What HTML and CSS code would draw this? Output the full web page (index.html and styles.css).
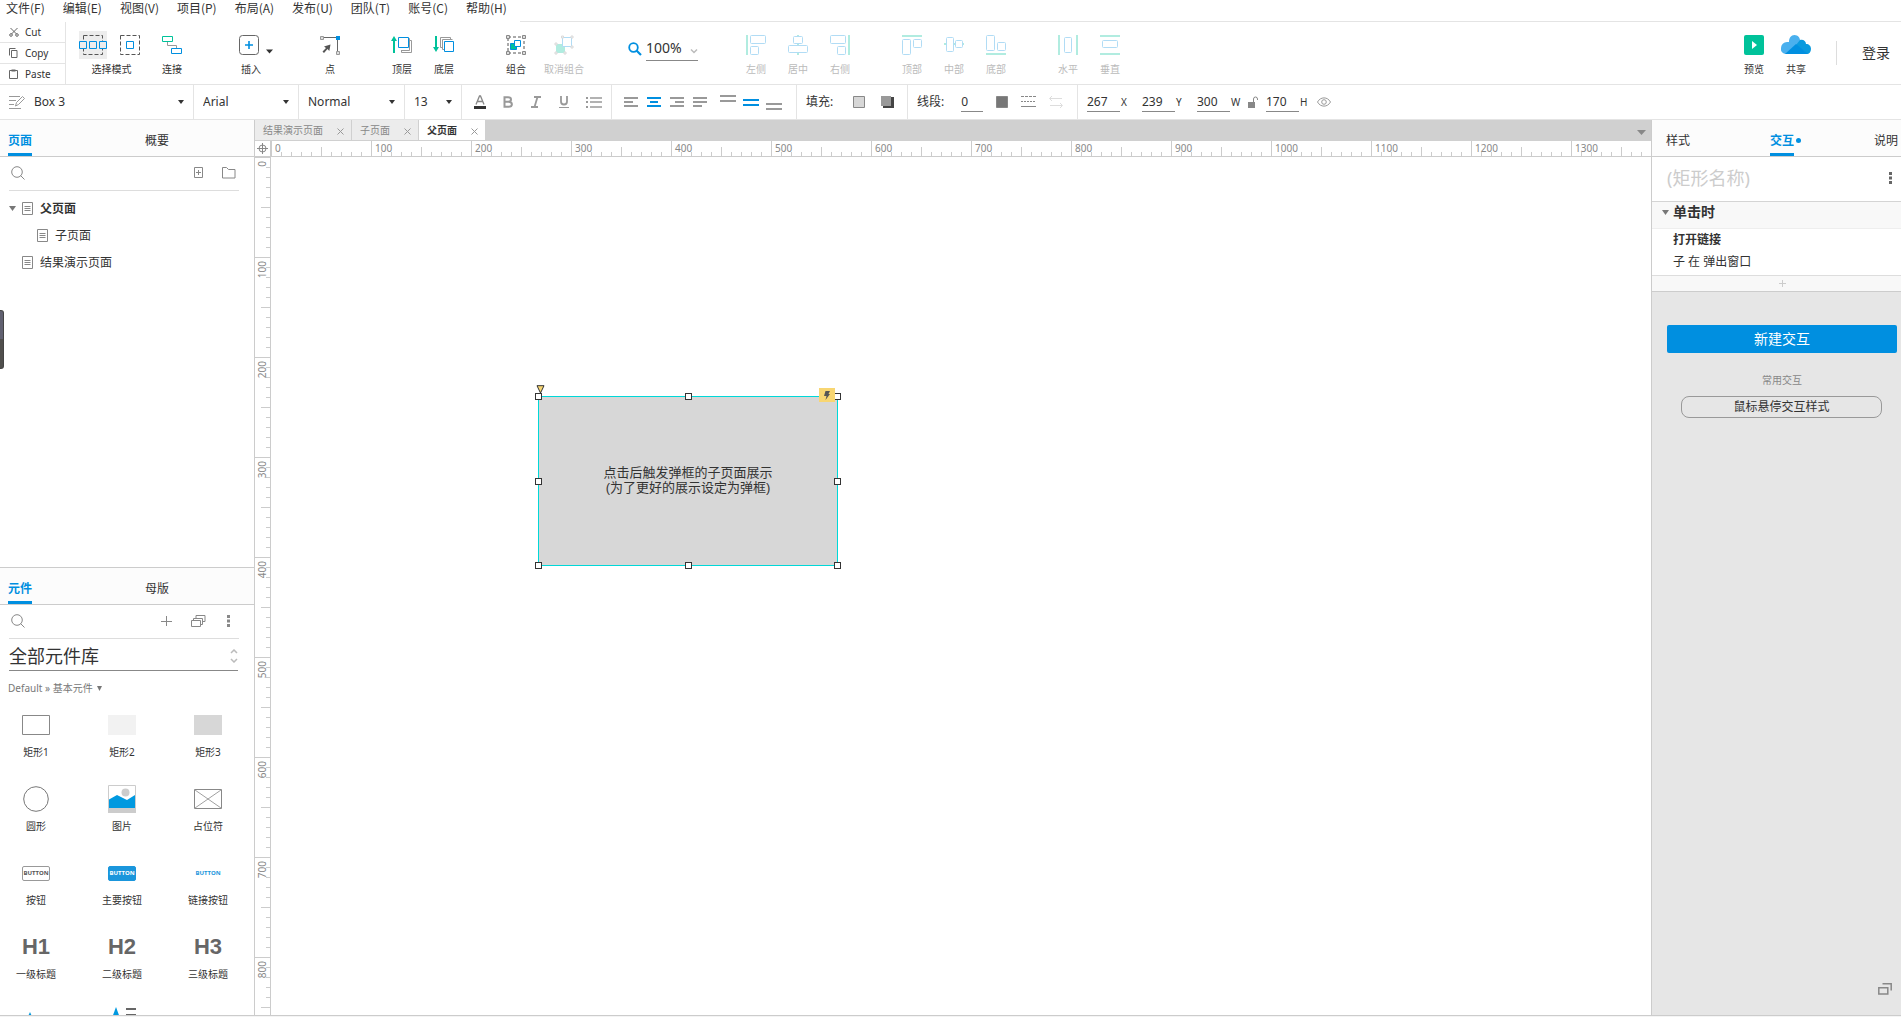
FILE: index.html
```
<!DOCTYPE html>
<html lang="zh-CN">
<head>
<meta charset="utf-8">
<meta name="viewport" content="width=device-width, initial-scale=1">
<title>父页面</title>
<link rel="stylesheet" href="styles.css">
</head>
<body>
<div class="app">
  <nav class="menubar">
    <button>文件(F)</button><button>编辑(E)</button><button>视图(V)</button><button>项目(P)</button><button>布局(A)</button><button>发布(U)</button><button>团队(T)</button><button>账号(C)</button><button>帮助(H)</button>
  </nav>

  <header class="toolbar">
    <div class="clipboard">
      <button><svg width="10" height="10" viewBox="0 0 10 10" fill="none" stroke="#666"><path d="M1.5 1l6 6M8.500 1l-6 6"/><circle cx="2" cy="8" r="1.300"/><circle cx="8" cy="8" r="1.300"/></svg>Cut</button>
      <button><svg width="10" height="10" viewBox="0 0 10 10" fill="none" stroke="#666"><path d="M2.500 2.500h5.500v7h-5.500z"/><path d="M.5 7.500v-7h6"/></svg>Copy</button>
      <button><svg width="10" height="10" viewBox="0 0 10 10" fill="none" stroke="#666"><path d="M.5 1.500h8v8h-8z"/><path d="M2.500 1.500h4" stroke-width="2"/></svg>Paste</button>
    </div>

    <div class="mode">
      <div class="mode-icons">
        <button class="mode-btn active" aria-label="相交选中"><svg width="28" height="28" viewBox="0 0 28 28" fill="none"><path d="M4.500 4.500h19v19h-19z" stroke="#555" stroke-dasharray="4 2"/><g fill="#ededed" stroke="#008fe0"><path d="M.5 10.500h7v7h-7zM10.500 10.500h7v7h-7zM20.500 10.500h7v7h-7z"/></g></svg></button>
        <button class="mode-btn" aria-label="包含选中"><svg width="28" height="28" viewBox="0 0 28 28" fill="none"><path d="M4.500 4.500h19v19h-19z" stroke="#555" stroke-dasharray="4 2"/><path d="M10.500 10.500h7v7h-7z" stroke="#008fe0"/></svg></button>
      </div>
      <span class="tool-label">选择模式</span>
    </div>

    <button class="tool connect"><svg width="20" height="20" viewBox="0 0 20 20" fill="none"><path d="M5.500 7v3.500h9V13" stroke="#999"/><path d="M.5 1.500h10v5H.5z" stroke="#00c29a"/><path d="M9.500 13.500h10v5h-10z" stroke="#008fe0"/></svg><span>连接</span></button>
    <button class="insert"><svg width="36" height="20" viewBox="0 0 36 20" fill="none"><rect x=".5" y=".5" width="19" height="19" rx="3" stroke="#666"/><path d="M10 6v8M6 10h8" stroke="#008fe0" stroke-width="1.600"/><path d="M27 14.500h7l-3.500 4z" fill="#333"/></svg><span>插入</span></button>
    <button class="tool point"><svg width="20" height="20" viewBox="0 0 20 20" fill="none"><path d="M3 2.500h14.500V17" stroke="#666"/><path d="M.5 1.500h3v3h-3zM16.500 16.500h3v3h-3z" fill="#ddd" stroke="#999"/><path d="M16 1h4v4h-4z" fill="#008fe0"/><path d="M10.500 9.500L9.300 16 7.500 14 4 18 2.500 16.500 6 13 4 11.500z" fill="#555"/></svg><span>点</span></button>
    <button class="tool gap-30"><svg width="22" height="20" viewBox="0 0 22 20" fill="none"><path d="M3 18V4" stroke="#00c29a" stroke-width="2"/><path d="M0 6l3-5 3 5z" fill="#00c29a"/><path d="M18 5.500h2.500v12h-10V15M16 3.500h2.500v12h-8" stroke="#999"/><path d="M7.500 2.500h10v10h-10z" stroke="#008fe0" fill="#fff"/></svg><span>顶层</span></button>
    <button class="tool"><svg width="22" height="20" viewBox="0 0 22 20" fill="none"><path d="M3 1v14" stroke="#00c29a" stroke-width="2"/><path d="M0 12l3 5 3-5z" fill="#00c29a"/><path d="M10 12.500H7.500v-10h10V5M12 14.500H9.500v-10h10" stroke="#999"/><path d="M11.500 6.500h9v10h-9z" stroke="#008fe0" fill="#fff"/></svg><span>底层</span></button>
    <button class="tool gap-30"><svg width="20" height="20" viewBox="0 0 20 20" fill="none"><path d="M2 2h16v16H2z" stroke="#555" stroke-dasharray="3 2"/><path d="M.5.5h3v3h-3zM16.500.5h3v3h-3zM.5 16.500h3v3h-3zM16.500 16.500h3v3h-3z" fill="#ddd" stroke="#888"/><path d="M4.500 8.500h6v6h-6z" fill="#00c29a" stroke="#008fe0"/><path d="M8.500 5.500h6v6h-6z" fill="#fff" stroke="#008fe0"/></svg><span>组合</span></button>
    <button class="tool ungroup" disabled><svg width="20" height="20" viewBox="0 0 20 20" fill="none"><path d="M2 9h9v9H2z" fill="#00c29a"/><path d="M8.500 2.500h9v9h-9z" fill="#fff" stroke="#008fe0"/><path d="M7.500 1h2v2h-2zM17 1h2v2h-2zM17 11h2v2h-2zM1 8h2v2H1zM1 17h2v2H1zM10 17h2v2h-2z" fill="#ddd" stroke="#888"/></svg><span>取消组合</span></button>

    <div class="zoom">
      <svg width="14" height="14" viewBox="0 0 14 14" fill="none" stroke="#008fe0" stroke-width="1.800"><circle cx="5.500" cy="5.500" r="4.300"/><path d="M8.500 8.500L13 13" stroke-width="2.200"/></svg>
      <label class="zoom-field"><input type="text" value="100%" aria-label="缩放"><svg width="8" height="6" viewBox="0 0 8 6" fill="none" stroke="#bbb" stroke-width="1.500"><path d="M1 1.500l3 3 3-3"/></svg></label>
    </div>

    <div class="tool-group first">
      <button class="tool" disabled><svg width="20" height="20" viewBox="0 0 20 20" fill="none"><path d="M1 0v20" stroke="#00c29a" stroke-width="2"/><rect x="4.500" y=".5" width="15" height="8" rx="1" stroke="#008fe0"/><rect x="4.500" y="11.500" width="8" height="8" rx="1" stroke="#008fe0"/></svg><span>左侧</span></button>
      <button class="tool" disabled><svg width="20" height="20" viewBox="0 0 20 20" fill="none"><path d="M10 0v20" stroke="#00c29a" stroke-width="2"/><g fill="#fff" stroke="#008fe0"><rect x="5.500" y="1.500" width="9" height="7" rx="1"/><rect x=".5" y="10.500" width="19" height="7" rx="1"/></g></svg><span>居中</span></button>
      <button class="tool" disabled><svg width="20" height="20" viewBox="0 0 20 20" fill="none"><path d="M19 0v20" stroke="#00c29a" stroke-width="2"/><rect x=".5" y=".5" width="15" height="8" rx="1" stroke="#008fe0"/><rect x="7.500" y="11.500" width="8" height="8" rx="1" stroke="#008fe0"/></svg><span>右侧</span></button>
    </div>
    <div class="tool-group">
      <button class="tool" disabled><svg width="20" height="20" viewBox="0 0 20 20" fill="none"><path d="M0 1h20" stroke="#00c29a" stroke-width="2"/><rect x=".5" y="4.500" width="8" height="15" rx="1" stroke="#008fe0"/><rect x="11.500" y="4.500" width="8" height="8" rx="1" stroke="#008fe0"/></svg><span>顶部</span></button>
      <button class="tool" disabled><svg width="20" height="20" viewBox="0 0 20 20" fill="none"><path d="M0 9h20" stroke="#00c29a" stroke-width="2"/><g fill="#fff" stroke="#008fe0"><rect x="2.500" y="2.500" width="7" height="14" rx="1"/><rect x="11.500" y="5.500" width="7" height="7" rx="1"/></g></svg><span>中部</span></button>
      <button class="tool" disabled><svg width="20" height="20" viewBox="0 0 20 20" fill="none"><path d="M0 19h20" stroke="#00c29a" stroke-width="2"/><rect x=".5" y=".5" width="8" height="15" rx="1" stroke="#008fe0"/><rect x="11.500" y="7.500" width="8" height="8" rx="1" stroke="#008fe0"/></svg><span>底部</span></button>
    </div>
    <div class="tool-group">
      <button class="tool" disabled><svg width="20" height="20" viewBox="0 0 20 20" fill="none"><path d="M1 0v20M19 0v20" stroke="#00c29a" stroke-width="2"/><rect x="6.500" y="2.500" width="7" height="15" rx="1" stroke="#008fe0"/></svg><span>水平</span></button>
      <button class="tool" disabled><svg width="20" height="20" viewBox="0 0 20 20" fill="none"><path d="M0 1h20M0 19h20" stroke="#00c29a" stroke-width="2"/><rect x="2.500" y="5.500" width="15" height="7" rx="1" stroke="#008fe0"/></svg><span>垂直</span></button>
    </div>

    <div class="account">
      <button class="tool"><svg width="20" height="20" viewBox="0 0 20 20"><rect width="20" height="20" rx="2" fill="#00c29a"/><path d="M8 6l5 4-5 4z" fill="#fff"/></svg><span>预览</span></button>
      <button class="tool"><svg width="30" height="20" viewBox="0 0 30 20"><path d="M5 19a5 5 0 0 1-5-6 6 6 0 0 1 6-6h2C8 3 10 0 13.500 0S19 3 19 5l4 3-4 11z" fill="#4ab0ee"/><path d="M15 10l4-5c3-1 6 1 6 4 3 0 5 2 5 5 0 3-2 5-4 5z" fill="#0a9ade"/><path d="M4 19L15 9l12 10z" fill="#008fe0"/></svg><span>共享</span></button>
      <button class="login">登录</button>
    </div>
  </header>

  <div class="format">
    <div class="seg seg-name">
      <svg width="16" height="14" viewBox="0 0 16 14" fill="none" stroke="#999"><path d="M0 1.500h11M0 5.500h7M0 9.500h5M0 13.500h12"/><path d="M6.500 11l1-3.500 6-6 2 2-6 6z"/></svg>
      <label class="pick"><select aria-label="样式"><option>Box 3</option></select></label>
    </div>
    <div class="seg seg-font"><label class="pick"><select aria-label="字体"><option>Arial</option></select></label></div>
    <div class="seg seg-weight"><label class="pick"><select aria-label="字型"><option>Normal</option></select></label></div>
    <div class="seg seg-size"><label class="pick"><select aria-label="字号"><option>13</option></select></label></div>
    <div class="seg seg-text">
      <button aria-label="文字颜色"><svg width="12" height="14" viewBox="0 0 12 14" fill="none"><path d="M2 9.500L5.500 1h1L10 9.500M3.500 6.500h5" stroke="#888" stroke-width="1.300"/><path d="M0 12.500h12" stroke="#333" stroke-width="3"/></svg></button>
      <button aria-label="粗体"><svg width="12" height="14" viewBox="0 0 12 14" fill="none" stroke="#999" stroke-width="2"><path d="M2.500 2.200h3.500c4 0 4 4.600 0 4.600H2.500h4c4.500 0 4.500 5 0 5h-4z"/></svg></button>
      <button aria-label="斜体"><svg width="12" height="14" viewBox="0 0 12 14" fill="none" stroke="#999" stroke-width="1.800"><path d="M4 2h7M1 12h7M7.500 2l-3 10"/></svg></button>
      <button aria-label="下划线"><svg width="12" height="14" viewBox="0 0 12 14" fill="none" stroke="#999"><path d="M3 1v5.500a3 3 0 0 0 6 0V1" stroke-width="1.800"/><path d="M1 12.500h10"/></svg></button>
      <button aria-label="项目符号"><svg width="16" height="14" viewBox="0 0 16 14" stroke="#999" stroke-width="2"><path d="M0 3h2M0 7h2M0 12h2"/><path d="M4 3h12M4 7h12M4 12h12" stroke-width="1.500"/></svg></button>
    </div>
    <div class="seg seg-align">
      <button aria-label="左对齐"><svg width="14" height="12" viewBox="0 0 14 12" stroke="#999" stroke-width="2"><path d="M0 2h14M0 6h9M0 10h14"/></svg></button>
      <button aria-label="居中对齐"><svg width="14" height="12" viewBox="0 0 14 12" stroke="#008fe0" stroke-width="2"><path d="M0 2h14M3 6h8M0 10h14"/></svg></button>
      <button aria-label="右对齐"><svg width="14" height="12" viewBox="0 0 14 12" stroke="#999" stroke-width="2"><path d="M0 2h14M5 6h9M0 10h14"/></svg></button>
      <button aria-label="两端对齐"><svg width="14" height="12" viewBox="0 0 14 12" stroke="#999" stroke-width="2"><path d="M0 2h14M0 6h14M0 10h9"/></svg></button>
      <button class="valign" aria-label="顶部对齐"><svg width="16" height="16" viewBox="0 0 16 16" stroke="#999" stroke-width="2"><path d="M0 2h16M0 7h16"/></svg></button>
      <button class="valign" aria-label="垂直居中"><svg width="16" height="16" viewBox="0 0 16 16" stroke="#008fe0" stroke-width="2"><path d="M0 6h16M0 11h16"/></svg></button>
      <button class="valign" aria-label="底部对齐"><svg width="16" height="16" viewBox="0 0 16 16" stroke="#999" stroke-width="2"><path d="M0 10h16M0 15h16"/></svg></button>
    </div>
    <div class="seg seg-fill">
      <span class="seg-title">填充:</span>
      <button aria-label="填充颜色"><svg width="12" height="12" viewBox="0 0 12 12"><path d="M.5.5h11v11H.5z" fill="#d7d7d7" stroke="#888"/></svg></button>
      <button aria-label="阴影"><svg width="13" height="12" viewBox="0 0 13 12"><path d="M2 1h11v11H2z" fill="#444"/><path d="M0 0h10v10H0z" fill="#999"/></svg></button>
    </div>
    <div class="seg seg-line">
      <label class="seg-title" for="line-w">线段:</label><input id="line-w" class="num short" type="text" value="0">
      <button aria-label="线段颜色"><svg width="12" height="12" viewBox="0 0 12 12"><path d="M.5.5h11v11H.5z" fill="#777" stroke="#888"/></svg></button>
      <button aria-label="线型"><svg width="15" height="12" viewBox="0 0 15 12" stroke="#888"><path d="M0 .5h15" stroke-dasharray="3 1"/><path d="M0 5.500h15" stroke-dasharray="2 1"/><path d="M0 10.500h15"/></svg></button>
      <button aria-label="箭头"><svg width="14" height="12" viewBox="0 0 14 12" fill="none" stroke="#ddd"><path d="M13 2.500H1M3 0L.5 2.500 3 5M1 9.500h12M11 7l2.500 2.500L11 12"/></svg></button>
    </div>
    <div class="seg seg-geo">
      <label><input class="num" type="text" value="267"><span>X</span></label>
      <label><input class="num" type="text" value="239"><span>Y</span></label>
      <label><input class="num" type="text" value="300"><span>W</span></label>
      <button class="lock" aria-label="锁定比例"><svg width="10" height="12" viewBox="0 0 10 12" fill="none"><path d="M0 6h7v6H0z" fill="#888"/><path d="M5.500 6V3a2 2 0 0 1 4 0v1" stroke="#888"/></svg></button>
      <label><input class="num" type="text" value="170"><span>H</span></label>
      <button class="eye" aria-label="可见性"><svg width="14" height="10" viewBox="0 0 14 10" fill="none" stroke="#999"><path d="M.5 5C3.500-.5 10.500-.5 13.500 5 10.500 10.500 3.500 10.500.5 5z"/><circle cx="7" cy="5" r="2.300"/></svg></button>
    </div>
  </div>

  <main class="work">
    <aside class="left">
      <section class="pages">
        <div class="tabs"><button class="tab on">页面</button><button class="tab">概要</button></div>
        <div class="search">
          <button aria-label="搜索"><svg width="14" height="14" viewBox="0 0 14 14" fill="none" stroke="#888"><circle cx="6" cy="6" r="5.300"/><path d="M9.500 9.500l4 4"/></svg></button>
          <span class="grow"></span>
          <button aria-label="添加页面"><svg width="9" height="12" viewBox="0 0 9 12" fill="none" stroke="#888"><path d="M.5.5h8v10h-8zM4.500 3v5M2 5.500h5"/></svg></button>
          <button class="folder" aria-label="添加文件夹"><svg width="14" height="12" viewBox="0 0 14 12" fill="none" stroke="#888"><path d="M.5.500h4l2 2h6.500v8.500H.5z"/></svg></button>
        </div>
        <ul class="tree">
          <li><button class="current"><svg width="7" height="5" viewBox="0 0 7 5"><path d="M0 0h7L3.500 5z" fill="#777"/></svg><svg class="doc" width="11" height="13" viewBox="0 0 11 13" fill="none" stroke="#888"><path d="M.5.5h10v12H.5zM2.500 4.500h6M2.500 6.500h6M2.500 8.500h6"/></svg>父页面</button></li>
          <li><button class="child"><svg class="doc" width="11" height="13" viewBox="0 0 11 13" fill="none" stroke="#888"><path d="M.5.5h10v12H.5zM2.500 4.500h6M2.500 6.500h6M2.500 8.500h6"/></svg>子页面</button></li>
          <li><button class="root"><svg class="doc" width="11" height="13" viewBox="0 0 11 13" fill="none" stroke="#888"><path d="M.5.5h10v12H.5zM2.500 4.500h6M2.500 6.500h6M2.500 8.500h6"/></svg>结果演示页面</button></li>
        </ul>
      </section>

      <section class="widgets">
        <div class="tabs"><button class="tab on">元件</button><button class="tab">母版</button></div>
        <div class="search">
          <button aria-label="搜索"><svg width="14" height="14" viewBox="0 0 14 14" fill="none" stroke="#888"><circle cx="6" cy="6" r="5.300"/><path d="M9.500 9.500l4 4"/></svg></button>
          <span class="grow"></span>
          <button aria-label="添加元件库"><svg width="11" height="12" viewBox="0 0 11 12" stroke="#888"><path d="M5.500 1v10M0 6.500h11"/></svg></button>
          <button aria-label="元件库列表"><svg width="15" height="12" viewBox="0 0 15 12" fill="none" stroke="#888"><path d="M.5 5.500h9v6h-9zM2.500 5V3.500h9v6H10M5 3V.5h9v6h-2.500"/></svg></button>
          <button class="more" aria-label="更多"><svg width="4" height="12" viewBox="0 0 4 12" fill="#888"><path d="M0 0h3v3H0zM0 4.500h3v3H0zM0 9h3v3H0z"/></svg></button>
        </div>
        <label class="library"><select aria-label="元件库"><option>全部元件库</option></select><svg width="8" height="14" viewBox="0 0 8 14" fill="none" stroke="#bbb" stroke-width="1.500"><path d="M1 4l3-3 3 3M1 10l3 3 3-3"/></svg></label>
        <button class="crumb">Default » 基本元件 <svg width="5" height="5" viewBox="0 0 5 5"><path d="M0 0h5L2.500 5z" fill="#777"/></svg></button>
        <div class="shapes">
          <button><span class="pic"><svg width="28" height="20" viewBox="0 0 28 20"><path d="M.5.5h27v19H.5z" fill="#fff" stroke="#888"/></svg></span><span>矩形1</span></button>
          <button><span class="pic"><svg width="28" height="20"><rect width="28" height="20" fill="#f2f2f2"/></svg></span><span>矩形2</span></button>
          <button><span class="pic"><svg width="28" height="20"><rect width="28" height="20" fill="#d7d7d7"/></svg></span><span>矩形3</span></button>
          <button><span class="pic"><svg width="26" height="26" viewBox="0 0 26 26"><circle cx="13" cy="13" r="12.300" fill="#fff" stroke="#777"/></svg></span><span>圆形</span></button>
          <button><span class="pic"><svg width="28" height="28" viewBox="0 0 28 28"><path d="M.5.5h27v27H.5z" fill="#fff" stroke="#ccc"/><path d="M0 23h28v5H0z" fill="#ccc"/><circle cx="17.500" cy="7.500" r="4" fill="#ccc"/><path d="M1 14.500L9 10l10 5 8-5v13H1z" fill="#0099e0"/></svg></span><span>图片</span></button>
          <button><span class="pic"><svg width="28" height="20" viewBox="0 0 28 20" fill="none" stroke="#888"><path d="M.5.5h27v19H.5z"/><path d="M1 1l26 18M27 1L1 19" stroke-width=".8"/></svg></span><span>占位符</span></button>
          <button><span class="pic"><span class="btn-pic">BUTTON</span></span><span>按钮</span></button>
          <button><span class="pic"><span class="btn-pic solid">BUTTON</span></span><span>主要按钮</span></button>
          <button><span class="pic"><span class="btn-pic link">BUTTON</span></span><span>链接按钮</span></button>
          <button><span class="pic head">H1</span><span>一级标题</span></button>
          <button><span class="pic head">H2</span><span>二级标题</span></button>
          <button><span class="pic head">H3</span><span>三级标题</span></button>
          <button aria-label="文本标签"><span class="pic"><svg width="28" height="28" viewBox="0 0 28 28"><path d="M8 5l8 18H0z" fill="#0099e0"/></svg></span></button>
          <button aria-label="文本段落"><span class="pic"><svg width="28" height="28" viewBox="0 0 28 28"><path d="M8 0l8 22H0z" fill="#0099e0"/><path d="M18 2h10M18 8h10M18 14h10" stroke="#666" stroke-width="2"/></svg></span></button>
        </div>
      </section>
      <span class="side-handle"></span>
    </aside>

    <section class="center">
      <div class="doc-tabs">
        <div class="doc-tab"><a href="#">结果演示页面</a><button aria-label="关闭"><svg width="7" height="7" viewBox="0 0 7 7" stroke="#999"><path d="M.5.500l6 6M6.500.5l-6 6"/></svg></button></div>
        <div class="doc-tab"><a href="#">子页面</a><button aria-label="关闭"><svg width="7" height="7" viewBox="0 0 7 7" stroke="#999"><path d="M.5.500l6 6M6.500.5l-6 6"/></svg></button></div>
        <div class="doc-tab on"><a href="#">父页面</a><button aria-label="关闭"><svg width="7" height="7" viewBox="0 0 7 7" stroke="#999"><path d="M.5.500l6 6M6.500.5l-6 6"/></svg></button></div>
        <button class="tab-list" aria-label="全部标签"><svg width="9" height="5" viewBox="0 0 9 5"><path d="M0 0h9L4.500 5z" fill="#888"/></svg></button>
      </div>
      <div class="ruler-row">
        <span class="corner"><svg width="11" height="11" viewBox="0 0 11 11" fill="none" stroke="#888"><circle cx="5.500" cy="5.500" r="3.500"/><path d="M5.500 0v11M0 5.500h11"/></svg></span>
        <div class="ruler-x"><span>0</span><span>100</span><span>200</span><span>300</span><span>400</span><span>500</span><span>600</span><span>700</span><span>800</span><span>900</span><span>1000</span><span>1100</span><span>1200</span><span>1300</span></div>
      </div>
      <div class="canvas-row">
        <div class="ruler-y"><div><span>0</span></div><div><span>100</span></div><div><span>200</span></div><div><span>300</span></div><div><span>400</span></div><div><span>500</span></div><div><span>600</span></div><div><span>700</span></div><div><span>800</span></div></div>
        <div class="canvas">
          <div class="shape">
            <p>点击后触发弹框的子页面展示<br>(为了更好的展示设定为弹框)</p>
            <i class="h nw"></i><i class="h n"></i><i class="h ne"></i><i class="h w"></i><i class="h e"></i><i class="h sw"></i><i class="h s"></i><i class="h se"></i>
            <svg class="radius" width="9" height="9" viewBox="0 0 9 9"><path d="M1 .7h7L4.500 8z" fill="#f8d672" stroke="#333"/></svg>
            <span class="bolt"><svg width="6" height="9" viewBox="0 0 6 9"><path d="M1.500 0H6L4.500 3H6L1.500 9l1-4H0z" fill="#555"/></svg></span>
          </div>
        </div>
      </div>
    </section>

    <aside class="right">
      <div class="tabs"><button class="tab">样式</button><button class="tab on dot">交互</button><button class="tab">说明</button></div>
      <div class="name"><input type="text" placeholder="(矩形名称)" aria-label="名称"><button aria-label="更多"><svg width="3" height="12" viewBox="0 0 3 12" fill="#666"><path d="M0 0h3v3H0zM0 4.500h3v3H0zM0 9h3v3H0z"/></svg></button></div>
      <h2 class="event"><svg width="7" height="5" viewBox="0 0 7 5"><path d="M0 0h7L3.500 5z" fill="#777"/></svg>单击时</h2>
      <div class="action"><strong>打开链接</strong><span>子 在 弹出窗口</span></div>
      <button class="add-action" aria-label="添加动作"><svg width="7" height="7" viewBox="0 0 7 7" stroke="#ccc"><path d="M3.500 0v7M0 3.500h7"/></svg></button>
      <div class="more-panel">
        <button class="primary">新建交互</button>
        <span class="hint">常用交互</span>
        <button class="outline">鼠标悬停交互样式</button>
        <button class="popout" aria-label="弹出面板"><svg width="14" height="12" viewBox="0 0 14 12" fill="none" stroke="#888"><path d="M.800 4.800h9v6.200h-9z" stroke-width="1.500"/><path d="M4.500.800h8.700v6.700" stroke-width="1.500"/></svg></button>
      </div>
    </aside>
  </main>
  <footer class="foot"></footer>
</div>
</body>
</html>
```
FILE: styles.css
```
* { box-sizing: border-box; }
body {
  margin: 0;
  background: #fff;
  color: #333;
  font: 12px/16px "Noto Sans", "Noto Sans CJK SC", sans-serif;
}
button, input, select { font: inherit; color: inherit; background: none; border: 0; padding: 0; margin: 0; }
button { display: flex; align-items: center; white-space: nowrap; }
input, select { appearance: none; outline: 0; min-width: 0; }
svg { display: block; flex: none; }
a { color: inherit; text-decoration: none; }

.app { display: flex; flex-direction: column; height: 100vh; overflow: hidden; }

.menubar { display: flex; gap: 18px; height: 22px; padding: 0 6px 6px; flex: none; font-family: "Noto Sans CJK SC", sans-serif; }

.toolbar { display: flex; flex: none; height: 63px; border-bottom: 1px solid #e4e4e4; position: relative; }
.toolbar::before { content: ""; position: absolute; top: -1px; left: 520px; right: 0; height: 1px; background: #e4e4e4; }
.clipboard { width: 66px; flex: none; border-right: 1px solid #e4e4e4; display: grid; grid-template-rows: 21px 21px 20px; font-size: 10px; line-height: 14px; }
.clipboard button { gap: 6px; padding-left: 9px; border-bottom: 1px solid #e4e4e4; }
.clipboard button:last-child { border-bottom: 0; }

.mode { display: flex; flex-direction: column; align-items: center; padding-top: 9px; margin-left: 13px; gap: 3px; }
.mode-icons { display: flex; gap: 9px; }
.mode-btn.active { background: #ededed; }
.tool, .insert { flex-direction: column; gap: 7px; padding-top: 13px; font-size: 10px; line-height: 14px; }
.tool { width: 42px; flex: none; }
.tool-label { font-size: 10px; line-height: 14px; }
.tool:disabled { color: #bbb; }
.tool:disabled svg { opacity: .3; }
.connect { margin-left: 7px; }
.insert { margin-left: 46px; align-items: flex-start; }
.insert span { padding-left: 2px; }
.point { margin-left: 34px; }
.gap-30 { margin-left: 30px; }
.ungroup { margin-left: 6px; }
.zoom { display: flex; align-items: center; gap: 4px; margin: 12px 0 22px 43px; padding-top: 2px; }
.zoom-field { display: flex; align-items: center; width: 52px; height: 24px; padding-bottom: 2px; border-bottom: 1px solid #888; font-size: 14px; line-height: 20px; }
.zoom-field input { width: 44px; }
.zoom-field svg { margin-top: 6px; }
.tool-group { display: flex; margin-left: 30px; }
.tool-group.first { margin-left: 37px; }
.account { display: flex; margin-left: auto; }
.login { margin: 19px 11px 19px 19px; padding-left: 25px; border-left: 1px solid #ddd; font-size: 14px; line-height: 20px; }

.format { display: flex; flex: none; height: 35px; border-bottom: 1px solid #e4e4e4; }
.seg { display: flex; align-items: center; flex: none; border-right: 1px solid #e4e4e4; padding: 0 9px; }
.pick { display: flex; align-items: center; flex: 1; min-width: 0; }
.pick select { flex: 1; }
.pick::after { content: ""; border: 3px solid transparent; border-top: 4px solid #333; border-bottom: 0; }
.seg-name { width: 194px; gap: 9px; }
.seg-font { width: 105px; }
.seg-weight { width: 106px; }
.seg-size { width: 57px; }
.seg-text { width: 150px; padding-left: 12px; gap: 16px; }
.seg-align { width: 185px; padding-left: 12px; gap: 9px; }
.seg-align .valign { margin-left: 2px; margin-right: -4px; }
.seg-align button + .valign { margin-left: 4px; }
.seg-align .valign + .valign { margin-left: 2px; }
.seg-title { margin-right: 4px; }
.seg-fill { width: 111px; gap: 16px; }
.seg-line { width: 170px; gap: 13px; }
.num { width: 33px; height: 20px; border-bottom: 1px solid #888; }
.num.short { width: 22px; }
.seg-geo { border-right: 0; gap: 14px; }
.seg-geo label { display: flex; align-items: center; gap: 1px; }
.seg-geo label span { font-size: 10px; width: 7px; }
.seg-geo .lock { margin-right: -6px; margin-left: -4px; }
.seg-geo .eye { margin-left: -4px; }

.work { display: flex; flex: 1; min-height: 0; }
.left { width: 255px; flex: none; display: flex; flex-direction: column; border-right: 1px solid #ccc; position: relative; }
.pages { flex: 1; min-height: 0; }
.widgets { flex: 0 0 448px; min-height: 0; overflow: hidden; border-top: 1px solid #ccc; }
.side-handle { position: absolute; left: 0; top: 190px; width: 4px; height: 59px; background: linear-gradient(#606070 50%, #504f4d 50%); border: 1px solid #444; border-left: 0; border-radius: 0 3px 3px 0; }

.tabs { display: flex; height: 37px; background: #fcfcfc; border-bottom: 1px solid #ccc; padding-left: 8px; }
.left .tabs { gap: 113px; }
.tab { padding-top: 8px; border-bottom: 3px solid transparent; }
.tab.on { color: #008fe0; font-weight: bold; border-bottom-color: #008fe0; }

.search { display: flex; align-items: center; height: 34px; margin: 0 15px 0 9px; padding: 0 3px 2px 2px; border-bottom: 1px solid #ddd; gap: 19px; }
.grow { flex: 1; }
.tree { list-style: none; margin: 0; padding: 5px 0 0; }
.tree button { height: 27px; width: 100%; gap: 6px; padding: 0 0 2px 9px; }
.tree .doc { margin-right: 1px; }
.tree .current { font-weight: bold; }
.tree .child { padding-left: 37px; }
.tree .root { padding-left: 22px; }

.widgets .search { padding-right: 8px; }
.widgets .more { padding-left: 2px; }
.library { display: flex; align-items: center; height: 32px; margin: 0 16px 0 9px; padding-top: 2px; border-bottom: 1px solid #888; font-size: 18px; line-height: 24px; }
.library select { flex: 1; }
.crumb { margin: 10px 0 0 8px; gap: 4px; font-size: 10px; line-height: 14px; color: #777; }
.shapes { display: grid; grid-template-columns: repeat(3, 56px); column-gap: 30px; padding: 13px 0 0 8px; }
.shapes button { flex-direction: column; height: 74px; font-size: 10px; line-height: 14px; gap: 3px; }
.pic { display: flex; align-items: center; justify-content: center; height: 34px; }
.head { font: bold 22px/34px "Liberation Sans", sans-serif; color: #666; }
.btn-pic { width: 28px; height: 15px; border: 1px solid #999; border-radius: 2px; display: flex; align-items: center; justify-content: center; font: bold 6px/8px "Noto Sans", sans-serif; color: #555; }
.btn-pic.solid { background: #1a96dc; border-color: #1a96dc; color: #fff; }
.btn-pic.link { border-color: transparent; color: #1a96dc; }

.center { flex: 1; min-width: 0; display: flex; flex-direction: column; }
.doc-tabs { display: flex; height: 21px; flex: none; background: #d0d0d0; border-bottom: 1px solid #d0d0d0; font-size: 10px; line-height: 14px; }
.doc-tab { display: flex; align-items: center; gap: 14px; padding: 0 7px 0 8px; background: #ececec; color: #888; border-right: 1px solid #d0d0d0; }
.doc-tab.on { background: #fff; color: #333; font-weight: bold; }
.doc-tab button { padding-top: 2px; }
.tab-list { margin-left: auto; padding: 4px 5px 0 0; }
.ruler-row { display: flex; height: 16px; flex: none; border-bottom: 1px solid #ccc; }
.corner { width: 16px; flex: none; border-right: 1px solid #ccc; display: flex; align-items: center; justify-content: center; }
.ruler-x { display: flex; flex: 1; min-width: 0; overflow: hidden; font-size: 10px; line-height: 15px; color: #888; }
.ruler-x span {
  flex: none; width: 100px; padding-left: 3px; border-left: 1px solid #ccc;
  background: linear-gradient(#ccc, #ccc) 50px 100% / 1px 9px no-repeat,
    repeating-linear-gradient(90deg, #ccc 0 1px, transparent 1px 10px) 0 100% / 100% 4px no-repeat;
  background-origin: border-box;
}
.canvas-row { display: flex; flex: 1; min-height: 0; }
.ruler-y { width: 16px; flex: none; overflow: hidden; border-right: 1px solid #ccc; font-size: 10px; line-height: 15px; color: #888; }
.ruler-y div {
  height: 100px; border-top: 1px solid #ccc; padding-top: 3px;
  background: linear-gradient(#ccc, #ccc) 100% 50px / 9px 1px no-repeat,
    repeating-linear-gradient(#ccc 0 1px, transparent 1px 10px) 100% 0 / 4px 100% no-repeat;
  background-origin: border-box;
}
.ruler-y span { display: block; writing-mode: vertical-rl; transform: rotate(180deg); }
.canvas { flex: 1; position: relative; overflow: hidden; }
.shape { position: absolute; left: 267px; top: 239px; width: 300px; height: 170px; background: #d7d7d7; border: 1px solid #00d8d8; display: flex; align-items: center; justify-content: center; }
.shape p { margin: 0; padding-bottom: 2px; font-size: 13px; line-height: 15px; text-align: center; font-family: "Liberation Sans", "Noto Sans CJK SC", sans-serif; }
.h { position: absolute; width: 7px; height: 7px; background: #fff; border: 1px solid #333; }
.nw, .n, .ne { top: -4px; }
.w, .e { top: 81px; }
.sw, .s, .se { bottom: -4px; }
.nw, .w, .sw { left: -4px; }
.n, .s { left: 146px; }
.ne, .e, .se { right: -4px; }
.radius { position: absolute; left: -3px; top: -12px; }
.bolt { position: absolute; right: 2px; top: -9px; width: 16px; height: 14px; background: #f8d672; display: flex; align-items: center; justify-content: center; }

.right { width: 250px; flex: none; display: flex; flex-direction: column; border-left: 1px solid #ccc; }
.right .tabs { padding: 0 3px 0 14px; justify-content: space-between; flex: none; }
.dot { position: relative; }
.dot::after { content: ""; position: absolute; left: 26px; top: 18px; width: 5px; height: 5px; border-radius: 50%; background: #008fe0; }
.name { display: flex; align-items: center; height: 45px; flex: none; padding: 0 9px 2px 15px; border-bottom: 1px solid #d4d4d4; }
.name input { flex: 1; font-size: 18px; line-height: 24px; }
.name input::placeholder { color: #ccc; opacity: 1; }
.event { margin: 0; display: flex; align-items: center; gap: 4px; height: 27px; flex: none; padding: 0 0 6px 10px; background: #f8f8f8; border-bottom: 1px solid #eee; font-size: 14px; line-height: 20px; }
.action { display: flex; flex-direction: column; gap: 6px; padding: 3px 0 5px 21px; }
.add-action { justify-content: center; height: 17px; flex: none; padding-left: 11px; background: #f8f8f8; border-top: 1px solid #ddd; border-bottom: 1px solid #ccc; }
.more-panel { flex: 1; display: flex; flex-direction: column; background: #e6e6e6; padding: 33px 4px 20px 15px; }
.primary { justify-content: center; height: 28px; background: #008fe0; color: #fff; border-radius: 2px; font-size: 14px; line-height: 20px; }
.hint { margin-top: 20px; font-size: 10px; line-height: 14px; text-align: center; color: #888; }
.outline { justify-content: center; height: 22px; margin: 9px 15px 0 14px; border: 1px solid #999; border-radius: 8px; }
.popout { margin: auto 5px 0 auto; }

.foot { flex: none; height: 2px; border-top: 1px solid #ccc; background: #f4f4f4; }
```
